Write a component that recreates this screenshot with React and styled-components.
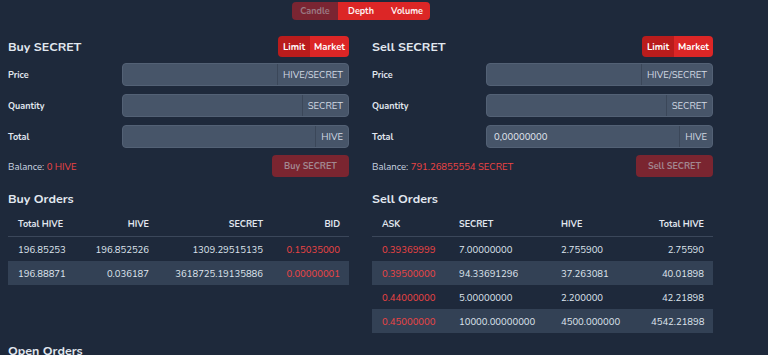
import React from 'react'
import styled, { createGlobalStyle } from 'styled-components'

const Global = createGlobalStyle`
  html, body {
    margin: 0;
    background: #1e293b;
    color: #e2e8f0;
    font-family: Nunito, Lato, "Noto Sans", sans-serif;
  }
`

const Page = styled.div`
  height: 355px;
  overflow: hidden;
  padding: 2px 0 0 8px;
  box-sizing: border-box;
`

const Tabs = styled.div`
  display: flex;
  justify-content: center;
  width: 706px;
`

const TabGroup = styled.div`
  display: flex;
  border-radius: 4px;
  overflow: hidden;
`

const Tab = styled.div`
  width: 46px;
  height: 18px;
  display: flex;
  align-items: center;
  justify-content: center;
  font-size: 9px;
  font-weight: 700;
  background: ${p => (p.active ? '#7a2532' : '#dc2626')};
  color: ${p => (p.active ? '#9a7a84' : '#fdf2f2')};
`

const Columns = styled.div`
  display: grid;
  grid-template-columns: 341px 341px;
  column-gap: 23px;
  margin-top: 16px;
`

const Panel = styled.div`
  display: flex;
  flex-direction: column;
`

const PanelHead = styled.div`
  display: flex;
  justify-content: space-between;
  align-items: center;
  height: 21px;
`

const Title = styled.div`
  font-size: 12.5px;
  font-weight: 700;
  color: #e2e8f0;
`

const Toggle = styled.div`
  display: flex;
  border-radius: 4px;
  overflow: hidden;
  height: 21px;
`

const ToggleBtn = styled.div`
  display: flex;
  align-items: center;
  padding: 0 ${p => (p.active ? '5px' : '4px')};
  font-size: 9.5px;
  font-weight: 700;
  color: #fff;
  background: ${p => (p.active ? '#b91c1c' : '#dc2626')};
`

const Form = styled.div`
  display: flex;
  flex-direction: column;
  gap: 8px;
  margin-top: 6px;
`

const Row = styled.div`
  display: grid;
  grid-template-columns: 114px 227px;
  align-items: center;
`

const Label = styled.div`
  font-size: 9px;
  font-weight: 700;
  color: #e2e8f0;
`

const InputGroup = styled.div`
  display: flex;
  height: 23px;
  box-sizing: border-box;
  background: #475569;
  border: 1px solid #536175;
  border-radius: 4px;
`

const Input = styled.div`
  flex: 1;
  display: flex;
  align-items: center;
  padding-left: 7px;
  font-size: 9.5px;
  color: #e2e8f0;
`

const Addon = styled.div`
  display: flex;
  align-items: center;
  padding: 0 5px;
  border-left: 1px solid #3b4759;
  font-size: 9.5px;
  color: #d3dae4;
`

const BalanceRow = styled.div`
  display: flex;
  justify-content: space-between;
  align-items: center;
  margin-top: 7px;
`

const Balance = styled.div`
  font-size: 9.5px;
  color: #cbd5e1;
  span {
    color: #ef4444;
  }
`

const ActionBtn = styled.div`
  width: 77px;
  height: 22px;
  display: flex;
  align-items: center;
  justify-content: center;
  border-radius: 4px;
  background: #7a2530;
  color: #a28891;
  font-size: 9px;
  font-weight: 700;
`

const SectionTitle = styled.div`
  font-size: 12.5px;
  font-weight: 700;
  margin-top: 13px;
`

const Table = styled.table`
  width: 341px;
  border-collapse: collapse;
  table-layout: fixed;
  margin-top: 11px;
  font-size: 9.5px;
`

const Th = styled.th`
  font-weight: 700;
  font-size: 9px;
  text-align: ${p => p.align || 'left'};
  padding: 0 9px 6px 10px;
  border-bottom: 1px solid #3b475a;
  color: #e2e8f0;
`

const Tr = styled.tr`
  background: ${p => (p.striped ? '#334155' : 'transparent')};
`

const Td = styled.td`
  height: 24px;
  padding: 0 9px 0 10px;
  text-align: ${p => p.align || 'left'};
  color: ${p => (p.red ? '#ef4444' : '#dfe5ee')};
  white-space: nowrap;
`

const OpenTitle = styled.div`
  font-size: 12.5px;
  font-weight: 700;
  margin-top: 9px;
`

const buyOrders = [
  ['196.85253', '196.852526', '1309.29515135', '0.15035000'],
  ['196.88871', '0.036187', '3618725.19135886', '0.00000001'],
]

const sellOrders = [
  ['0.39369999', '7.00000000', '2.755900', '2.75590'],
  ['0.39500000', '94.33691296', '37.263081', '40.01898'],
  ['0.44000000', '5.00000000', '2.200000', '42.21898'],
  ['0.45000000', '10000.00000000', '4500.000000', '4542.21898'],
]

const TradeForm = ({ side, balance, total }) => (
  <>
    <PanelHead>
      <Title>{side} SECRET</Title>
      <Toggle>
        <ToggleBtn active>Limit</ToggleBtn>
        <ToggleBtn>Market</ToggleBtn>
      </Toggle>
    </PanelHead>
    <Form>
      <Row>
        <Label>Price</Label>
        <InputGroup>
          <Input />
          <Addon>HIVE/SECRET</Addon>
        </InputGroup>
      </Row>
      <Row>
        <Label>Quantity</Label>
        <InputGroup>
          <Input />
          <Addon>SECRET</Addon>
        </InputGroup>
      </Row>
      <Row>
        <Label>Total</Label>
        <InputGroup>
          <Input>{total}</Input>
          <Addon>HIVE</Addon>
        </InputGroup>
      </Row>
    </Form>
    <BalanceRow>
      <Balance>
        Balance: <span>{balance}</span>
      </Balance>
      <ActionBtn>{side} SECRET</ActionBtn>
    </BalanceRow>
  </>
)

export default function App() {
  return (
    <Page>
      <Global />
      <Tabs>
        <TabGroup>
          <Tab active>Candle</Tab>
          <Tab>Depth</Tab>
          <Tab>Volume</Tab>
        </TabGroup>
      </Tabs>
      <Columns>
        <Panel>
          <TradeForm side="Buy" balance="0 HIVE" />
          <SectionTitle>Buy Orders</SectionTitle>
          <Table>
            <colgroup>
              <col style={{ width: 72 }} />
              <col style={{ width: 78 }} />
              <col style={{ width: 114 }} />
              <col style={{ width: 77 }} />
            </colgroup>
            <thead>
              <tr>
                <Th>Total HIVE</Th>
                <Th align="right">HIVE</Th>
                <Th align="right">SECRET</Th>
                <Th align="right">BID</Th>
              </tr>
            </thead>
            <tbody>
              {buyOrders.map((r, i) => (
                <Tr key={i} striped={i % 2 === 1}>
                  <Td>{r[0]}</Td>
                  <Td align="right">{r[1]}</Td>
                  <Td align="right">{r[2]}</Td>
                  <Td align="right" red>{r[3]}</Td>
                </Tr>
              ))}
            </tbody>
          </Table>
        </Panel>
        <Panel>
          <TradeForm side="Sell" balance="791.26855554 SECRET" total="0,00000000" />
          <SectionTitle>Sell Orders</SectionTitle>
          <Table>
            <colgroup>
              <col style={{ width: 77 }} />
              <col style={{ width: 102 }} />
              <col style={{ width: 90 }} />
              <col style={{ width: 72 }} />
            </colgroup>
            <thead>
              <tr>
                <Th>ASK</Th>
                <Th>SECRET</Th>
                <Th>HIVE</Th>
                <Th align="right">Total HIVE</Th>
              </tr>
            </thead>
            <tbody>
              {sellOrders.map((r, i) => (
                <Tr key={i} striped={i % 2 === 1}>
                  <Td red>{r[0]}</Td>
                  <Td>{r[1]}</Td>
                  <Td>{r[2]}</Td>
                  <Td align="right">{r[3]}</Td>
                </Tr>
              ))}
            </tbody>
          </Table>
        </Panel>
      </Columns>
      <OpenTitle>Open Orders</OpenTitle>
    </Page>
  )
}
